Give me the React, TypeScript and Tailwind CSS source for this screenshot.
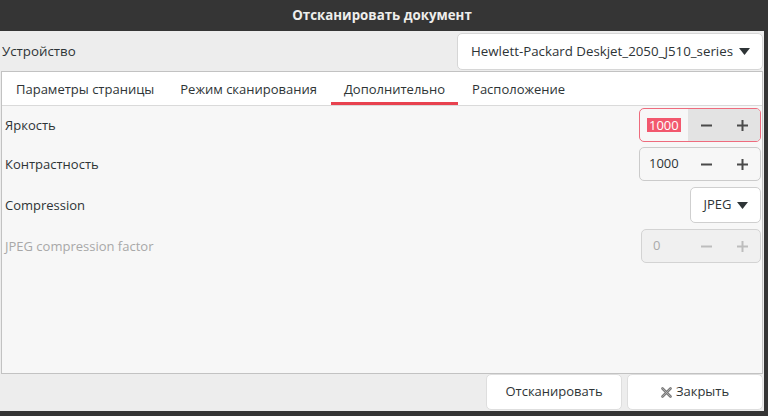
import React from "react";

const cond = { fontFamily: '"Open Sans", "Noto Sans", sans-serif', fontStretch: "88%" } as React.CSSProperties;

function Minus({ c }: { c: string }) {
  return (
    <svg width="11" height="11" viewBox="0 0 11 11">
      <rect x="0" y="4.5" width="11" height="2" fill={c} />
    </svg>
  );
}
function Plus({ c }: { c: string }) {
  return (
    <svg width="11" height="11" viewBox="0 0 11 11">
      <rect x="0" y="4.5" width="11" height="2" fill={c} />
      <rect x="4.5" y="0" width="2" height="11" fill={c} />
    </svg>
  );
}
function Tri() {
  return (
    <svg width="11" height="7" viewBox="0 0 11 7" className="shrink-0">
      <polygon points="0,0 11,0 5.5,7" fill="#2e3436" />
    </svg>
  );
}

function Spin({ value, focused, disabled }: { value: string; focused?: boolean; disabled?: boolean }) {
  const ic = disabled ? "#bdbdbd" : "#4a4a4a";
  return (
    <div
      className={
        "flex h-[34px] rounded-[5px] border overflow-hidden " +
        (focused
          ? "border-[#ee6b7d] bg-[#f7f7f7] w-[122px]"
          : disabled
          ? "border-[#d3d3d3] bg-[#f0f0f0] w-[120px]"
          : "border-[#cbcbcb] bg-[#f7f7f7] w-[122px]")
      }
    >
      <div className={"flex items-center pl-[7px] " + (disabled ? "w-[46px] text-[#aaaaaa] pl-[9px]" : "w-[48px] text-[#2e3436]")}>
        {focused ? (
          <span className="bg-[#f2586e] text-white px-[2px] leading-[14px]">{value}</span>
        ) : (
          <span className="px-[2px]">{value}</span>
        )}
      </div>
      <div className={"flex flex-1 " + (focused ? "bg-[#e3e3e3]" : "")}>
        <div className="flex-1 flex items-center justify-center">
          <Minus c={ic} />
        </div>
        <div className="flex-1 flex items-center justify-center">
          <Plus c={ic} />
        </div>
      </div>
    </div>
  );
}

export default function App() {
  const tabs = ["Параметры страницы", "Режим сканирования", "Дополнительно", "Расположение"];
  return (
    <div className="w-[768px] h-[416px] bg-[#353535] overflow-hidden" style={{ fontFamily: '"Open Sans", "Noto Sans", sans-serif' }}>
      <div className="h-[31px] w-[764px] flex items-center justify-center text-[13.3px] font-bold text-[#eeeeec] whitespace-nowrap" style={cond}>
        Отсканировать документ
      </div>
      <div className="w-[764px] h-[380px] bg-[#ededed] flex flex-col">
        <div className="h-[40px] flex items-start justify-between">
          <div className="pl-[2px] pt-[2px] h-[40px] flex items-center text-[13.3px] text-[#2e3436] whitespace-nowrap" style={cond}>
            Устройство
          </div>
          <div
            className="mt-[2px] mr-[1px] w-[306px] h-[37px] bg-white rounded-[5px] border border-[#d6d6d6] flex items-center justify-end gap-[6px] pr-[12px] text-[13.3px] text-[#2e3436] whitespace-nowrap"
            style={cond}
          >
            <span>Hewlett-Packard Deskjet_2050_J510_series</span>
            <Tri />
          </div>
        </div>
        <div className="ml-[1px] w-[762px] h-[303px] border border-[#c2c2c2] flex flex-col">
          <div className="h-[34px] bg-white border-b border-[#dadada] flex pl-[2px] gap-[2px] text-[13px] text-[#2e3436]">
            {tabs.map((t, i) => (
              <div key={t} className={"relative flex items-center pt-[3px] whitespace-nowrap " + (i === 2 ? "px-[13px]" : "px-[12px]")}>
                {t}
                {i === 2 && <div className="absolute left-0 right-0 bottom-0 h-[3px] bg-[#e8424f]" />}
              </div>
            ))}
          </div>
          <div className="flex-1 bg-[#f7f7f7] pt-[2px] pl-[3px] pr-[1px] flex flex-col text-[13px] text-[#2e3436]">
            <div className="h-[34px] flex items-center justify-between">
              <span className="pt-[2px]">Яркость</span>
              <Spin value="1000" focused />
            </div>
            <div className="h-[34px] mt-[5px] flex items-center justify-between">
              <span className="pt-[2px]">Контрастность</span>
              <Spin value="1000" />
            </div>
            <div className="h-[36px] mt-[6px] flex items-center justify-between">
              <span className="pt-[2px]">Compression</span>
              <div className="w-[71px] h-[36px] bg-white border border-[#cfcfcf] rounded-[5px] flex items-center justify-center gap-[5px]">
                <span>JPEG</span>
                <Tri />
              </div>
            </div>
            <div className="h-[34px] mt-[6px] flex items-center justify-between">
              <span className="pt-[2px] text-[#a8a8a8]">JPEG compression factor</span>
              <Spin value="0" disabled />
            </div>
          </div>
        </div>
        <div className="h-[36px] flex justify-end gap-[5px] pr-[1px] text-[13px] text-[#2e3436]">
          <div className="w-[136px] h-[36px] bg-white rounded-[5px] border border-[#dedede] flex items-center justify-center">
            Отсканировать
          </div>
          <div className="w-[136px] h-[36px] bg-white rounded-[5px] border border-[#dedede] flex items-center justify-center gap-[4px]">
            <svg width="11" height="11" viewBox="0 0 11 11">
              <path d="M1.5 1.5 L9.5 9.5 M9.5 1.5 L1.5 9.5" stroke="#7a7a7a" strokeWidth="2.6" strokeLinecap="round" />
              <path d="M1.5 1.5 L9.5 9.5 M9.5 1.5 L1.5 9.5" stroke="#b5b5b5" strokeWidth="0.8" strokeLinecap="round" />
            </svg>
            <span>Закрыть</span>
          </div>
        </div>
      </div>
    </div>
  );
}
